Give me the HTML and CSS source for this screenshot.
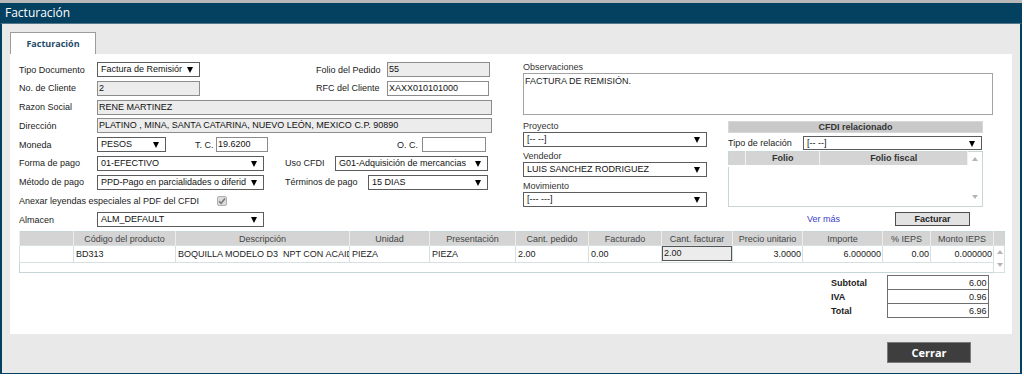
FILE: index.html
```html
<!doctype html>
<html lang="es">
<head>
    <meta charset="UTF-8">
    <title>Facturación</title>
    <link rel="stylesheet" href="styles.css">
</head>
<body>
<div class="window">
    <div class="title">Facturación</div>
    <div class="panel">
        <div class="tab">Facturación</div>
        <div class="content">
            <div class="top">
                <div class="form">
                    <div class="row">
                        <span class="lbl">Tipo Documento</span>
                        <span class="sel w103">Factura de Remisiór</span>
                        <span class="lbl2">Folio del Pedido</span>
                        <span class="inp ro w103">55</span>
                    </div>
                    <div class="row">
                        <span class="lbl">No. de Cliente</span>
                        <span class="inp ro w103">2</span>
                        <span class="lbl2">RFC del Cliente</span>
                        <span class="inp w102">XAXX010101000</span>
                    </div>
                    <div class="row">
                        <span class="lbl">Razon Social</span>
                        <span class="inp ro w395">RENE MARTINEZ</span>
                    </div>
                    <div class="row">
                        <span class="lbl">Dirección</span>
                        <span class="inp ro w395">PLATINO , MINA, SANTA CATARINA, NUEVO LEÓN, MEXICO C.P. 90890</span>
                    </div>
                    <div class="row">
                        <span class="lbl">Moneda</span>
                        <span class="sel w69">PESOS</span>
                        <span class="lbl-tc">T. C.</span>
                        <span class="inp w52">19.6200</span>
                        <span class="lbl-oc">O. C.</span>
                        <span class="inp w64"></span>
                    </div>
                    <div class="row">
                        <span class="lbl">Forma de pago</span>
                        <span class="sel w167">01-EFECTIVO</span>
                        <span class="lbl3 w50">Uso CFDI</span>
                        <span class="sel w153">G01-Adquisición de mercancias</span>
                    </div>
                    <div class="row">
                        <span class="lbl">Método de pago</span>
                        <span class="sel w167">PPD-Pago en parcialidades o diferid</span>
                        <span class="lbl3 w83">Términos de pago</span>
                        <span class="sel w120">15 DIAS</span>
                    </div>
                    <div class="row">
                        <span class="lbl-long">Anexar leyendas especiales al PDF del CFDI</span>
                        <span class="check">
                            <svg width="8" height="8" viewBox="0 0 8 8"><path d="M1 4.2 L3.1 6.3 L7 1.6" fill="none" stroke="#7a7a7a" stroke-width="1.5"/></svg>
                        </span>
                    </div>
                    <div class="row">
                        <span class="lbl">Almacen</span>
                        <span class="sel w167">ALM_DEFAULT</span>
                    </div>
                </div>

                <div class="side">
                    <div class="obs-lbl">Observaciones</div>
                    <div class="obs">FACTURA DE REMISIÓN.</div>
                    <div class="side-bottom">
                        <div class="fields">
                            <div class="fld-lbl">Proyecto</div>
                            <span class="sel w184">[-- --]</span>
                            <div class="fld-lbl">Vendedor</div>
                            <span class="sel w184">LUIS SANCHEZ RODRIGUEZ</span>
                            <div class="fld-lbl">Movimiento</div>
                            <span class="sel w184">[--- ---]</span>
                        </div>
                        <div class="cfdi">
                            <div class="cfdi-head">CFDI relacionado</div>
                            <div class="rel">
                                <span class="rel-lbl">Tipo de relación</span>
                                <span class="sel w179">[-- --]</span>
                            </div>
                            <table class="mini">
                                <colgroup><col style="width:17px"><col style="width:74px"><col style="width:147px"><col style="width:15px"></colgroup>
                                <tr>
                                    <th></th><th>Folio</th><th>Folio fiscal</th>
                                    <td class="vs" rowspan="2"><div class="vbar"><i class="up"></i><i class="dn"></i></div></td>
                                </tr>
                                <tr><td class="empty" colspan="3"></td></tr>
                            </table>
                            <div class="actions">
                                <a class="more" href="#">Ver más</a>
                                <span class="btn">Facturar</span>
                            </div>
                        </div>
                    </div>
                </div>
            </div>

            <table class="items">
                <colgroup>
                    <col style="width:54px"><col style="width:102px"><col style="width:174px"><col style="width:80px">
                    <col style="width:86px"><col style="width:73px"><col style="width:73px"><col style="width:71px">
                    <col style="width:70px"><col style="width:80px"><col style="width:48px"><col style="width:63px">
                    <col style="width:11px">
                </colgroup>
                <tr class="head">
                    <th></th><th>Código del producto</th><th>Descripción</th><th>Unidad</th><th>Presentación</th>
                    <th>Cant. pedido</th><th>Facturado</th><th>Cant. facturar</th><th>Precio unitario</th>
                    <th>Importe</th><th>% IEPS</th><th>Monto IEPS</th><th></th>
                </tr>
                <tr class="line">
                    <td></td><td>BD313</td><td>BOQUILLA MODELO D3&nbsp; NPT CON ACAIDOR</td><td>PIEZA</td><td>PIEZA</td>
                    <td>2.00</td><td>0.00</td><td class="edit"><span>2.00</span></td><td class="num">3.0000</td>
                    <td class="num">6.000000</td><td class="num">0.00</td><td class="num">0.000000</td>
                    <td class="vs" rowspan="2"><div class="vbar"><i class="up"></i><i class="dn"></i></div></td>
                </tr>
                <tr class="pad"><td colspan="12"></td></tr>
            </table>

            <table class="totals">
                <tr><th>Subtotal</th><td>6.00</td></tr>
                <tr><th>IVA</th><td>0.96</td></tr>
                <tr><th>Total</th><td>6.96</td></tr>
            </table>
        </div>
        <div class="foot">
            <span class="close">Cerrar</span>
        </div>
    </div>
</div>
</body>
</html>
```

FILE: styles.css
```css
*{
    margin:0;
    padding:0;
    box-sizing:border-box;
}
body{
    font-family:"Liberation Sans", Arial, sans-serif;
    font-size:9px;
    color:#222;
    background:#fff;
}
a{
    text-decoration:none;
}
.window{
    width:1022px;
    border-top:3px solid #b9b9b9;
}
.title{
    height:20px;
    line-height:20px;
    padding-left:5px;
    background:#04405f;
    color:#fff;
    font-family:"Open Sans", sans-serif;
    font-size:12px;
}
.panel{
    height:351px;
    background:#e9e9e9;
    border:2px solid #04405f;
    border-top:1px solid #54788b;
    border-bottom-width:1px;
    padding:8px 8px 0 8px;
}
.tab{
    width:86px;
    height:22px;
    line-height:21px;
    text-align:center;
    background:#fff;
    border:1px solid #9c9c9c;
    border-bottom:none;
    font-family:"Open Sans", sans-serif;
    font-weight:bold;
    font-size:9px;
    color:#1f4b68;
}
.content{
    height:280px;
    background:#fff;
    padding:8px 9px 0 9px;
}

/* formulario superior */
.top{
    display:flex;
    height:169px;
}
.form{
    width:474px;
}
.row{
    display:flex;
    align-items:center;
    height:15px;
    margin-bottom:3.8px;
    white-space:nowrap;
}
.lbl{ width:78px; }
.lbl2{ width:71px; margin-left:116px; }
.lbl-tc{ width:21px; margin-left:29px; }
.lbl-oc{ width:25px; margin-left:129px; }
.lbl3{ margin-left:21px; }
.lbl-long{ width:198px; }

.sel, .inp{
    display:block;
    height:15px;
    line-height:13px;
    overflow:hidden;
    white-space:nowrap;
    color:#111;
}
.sel{
    position:relative;
    border:1px solid #5c5c5c;
    padding-left:3px;
    background:#fff;
}
.sel::after{
    content:"";
    position:absolute;
    right:6px;
    top:4px;
    border-left:3.5px solid transparent;
    border-right:3.5px solid transparent;
    border-top:6px solid #000;
}
.inp{
    border:1px solid #8c8c8c;
    padding-left:1px;
    background:#fff;
}
.inp.ro{ background:#ececec; }

.w50{ width:50px; }
.w52{ width:52px; }
.w64{ width:64px; }
.w69{ width:69px; }
.w83{ width:83px; }
.w102{ width:102px; }
.w103{ width:103px; }
.w120{ width:120px; }
.w153{ width:153px; }
.w167{ width:167px; }
.w179{ width:179px; }
.w184{ width:184px; }
.w395{ width:395px; }

.check{
    display:flex;
    align-items:center;
    justify-content:center;
    width:10px;
    height:10px;
    background:#dcdcdc;
    border:1px solid #b0b0b0;
    border-radius:2px;
}

/* columna derecha */
.side{
    margin-left:30px;
    width:470px;
}
.obs-lbl{
    line-height:11px;
    color:#333;
}
.obs{
    height:42px;
    border:1px solid #a3a3a3;
    padding:2px 1px;
    line-height:11px;
}
.side-bottom{
    display:flex;
}
.fields{
    width:184px;
}
.fld-lbl{
    line-height:12px;
    margin-top:3px;
    color:#333;
}
.fields .fld-lbl:first-child{ margin-top:5px; }

.cfdi{
    margin-left:21px;
    width:255px;
}
.cfdi-head{
    margin-top:6px;
    height:12px;
    line-height:10px;
    text-align:center;
    font-weight:bold;
    color:#333;
    background:#c9c9c9;
    border:1px solid #d8d8d8;
}
.rel{
    display:flex;
    align-items:center;
    margin-top:3px;
    height:14px;
}
.rel .sel{ height:14px; line-height:12px; }
.rel-lbl{ width:75px; }

.mini{
    margin-top:1px;
    width:255px;
    height:56px;
    table-layout:fixed;
    border-collapse:collapse;
    border:1px solid #c9d6d6;
}
.mini th{
    height:14px;
    background:#d4d4d4;
    border-right:1px solid #f2f2f2;
    border-bottom:2px solid #fff;
    font-weight:bold;
    color:#333;
}
.mini .empty{ height:40px; }
.vs{
    background:#fff;
    vertical-align:top;
    padding:0;
}
.vbar{
    display:flex;
    flex-direction:column;
    justify-content:space-between;
    align-items:center;
    height:100%;
    padding:5px 0 6px;
}
.mini .vbar{ height:53px; }
.vbar i{
    display:block;
    border-left:3px solid transparent;
    border-right:3px solid transparent;
}
.vbar .up{ border-bottom:4px solid #b4b4b4; }
.vbar .dn{ border-top:4px solid #b4b4b4; }

.actions{
    display:flex;
    align-items:center;
    margin-top:5px;
    height:14px;
}
.more{
    margin-left:79px;
    color:#3d3dc8;
}
.btn{
    margin-left:55px;
    width:75px;
    height:14px;
    line-height:12px;
    text-align:center;
    font-weight:bold;
    color:#222;
    background:#e2e2e2;
    border:1px solid #4d4d4d;
}

/* detalle */
.items{
    width:985px;
    table-layout:fixed;
    border-collapse:collapse;
    border:1px solid #c6d5d5;
}
.items th{
    height:14px;
    background:#d4d4d4;
    border-left:1px solid #ededed;
    font-weight:normal;
    color:#444;
    white-space:nowrap;
    overflow:hidden;
}
.items .line td{
    height:16px;
    padding:0 1px 0 2px;
    border:1px solid #d6e0e0;
    white-space:nowrap;
    overflow:hidden;
}
.items .line td.num{ text-align:right; }
.items .line td.edit{ padding:0; }
.items .line td.edit span{
    display:block;
    height:15px;
    line-height:13px;
    padding-left:1px;
    background:#ececec;
    border:1px solid #555;
}
.items .pad td{ height:10px; }
.items .vs{ border:none; }
.items .vbar{ height:26px; padding:4px 0 5px; }

.totals{
    margin:2px 0 0 810px;
    border-collapse:collapse;
}
.totals th{
    width:58px;
    height:14px;
    text-align:left;
    padding-left:2px;
    color:#222;
}
.totals td{
    width:101px;
    height:14px;
    text-align:right;
    padding-right:1px;
    border:1px solid #6f6f6f;
}

.foot{
    display:flex;
    justify-content:flex-end;
    padding-right:41px;
    margin-top:8px;
}
.close{
    width:84px;
    height:21px;
    line-height:19px;
    text-align:center;
    background:#3e3e3e;
    border:1px solid #7a7a7a;
    color:#fff;
    font-family:"Open Sans", sans-serif;
    font-weight:bold;
    font-size:11px;
}
```
